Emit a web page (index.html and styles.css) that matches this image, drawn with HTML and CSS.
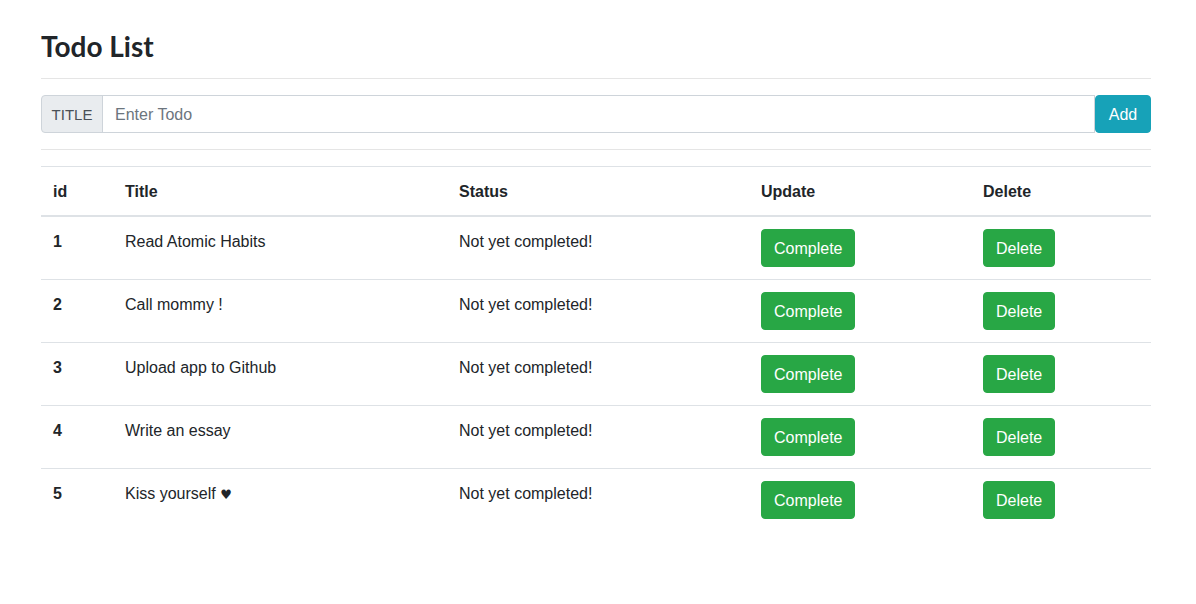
FILE: index.html
```html
<!DOCTYPE html>
<html lang="en">
<head>
<meta charset="utf-8">
<title>Todo List</title>
<link rel="stylesheet" href="styles.css">
</head>
<body>
<div class="container">
  <h2 class="title">Todo List</h2>
  <hr class="rule">
  <form class="input-group">
    <span class="prepend">TITLE</span>
    <input class="field" type="text" placeholder="Enter Todo">
    <button class="btn btn-info" type="button">Add</button>
  </form>
  <hr class="rule">
  <table class="table">
    <thead>
      <tr>
        <th class="c-id">id</th>
        <th class="c-title">Title</th>
        <th class="c-status">Status</th>
        <th class="c-update">Update</th>
        <th class="c-delete">Delete</th>
      </tr>
    </thead>
    <tbody>
      <tr>
        <th>1</th><td>Read Atomic Habits</td><td>Not yet completed!</td>
        <td class="act"><button class="btn btn-success">Complete</button></td>
        <td class="act"><button class="btn btn-success">Delete</button></td>
      </tr>
      <tr>
        <th>2</th><td>Call mommy !</td><td>Not yet completed!</td>
        <td class="act"><button class="btn btn-success">Complete</button></td>
        <td class="act"><button class="btn btn-success">Delete</button></td>
      </tr>
      <tr>
        <th>3</th><td>Upload app to Github</td><td>Not yet completed!</td>
        <td class="act"><button class="btn btn-success">Complete</button></td>
        <td class="act"><button class="btn btn-success">Delete</button></td>
      </tr>
      <tr>
        <th>4</th><td>Write an essay</td><td>Not yet completed!</td>
        <td class="act"><button class="btn btn-success">Complete</button></td>
        <td class="act"><button class="btn btn-success">Delete</button></td>
      </tr>
      <tr>
        <th>5</th><td>Kiss yourself <span class="heart">♥</span></td><td>Not yet completed!</td>
        <td class="act"><button class="btn btn-success">Complete</button></td>
        <td class="act"><button class="btn btn-success">Delete</button></td>
      </tr>
    </tbody>
  </table>
</div>
</body>
</html>
```

FILE: styles.css
```css
* { box-sizing: border-box; }

html, body {
  margin: 0;
  padding: 0;
  background: #fff;
}

body {
  font-family: "Liberation Sans", Arial, sans-serif;
  font-size: 16px;
  line-height: 24px;
  color: #212529;
}

.container {
  width: 1110px;
  margin-left: 41px;
  padding-top: 24px;
}

.title {
  margin: 0;
  font-family: Lato, "Liberation Sans", sans-serif;
  font-size: 28px;
  font-weight: 700;
  line-height: 38px;
  height: 38px;
  padding-top: 3px;
  color: #212529;
}

.rule {
  margin: 16px 0;
  border: 0;
  border-top: 1px solid rgba(0, 0, 0, 0.1);
  height: 0;
}

.input-group {
  display: flex;
  height: 38px;
  margin: 0;
}

.prepend {
  display: flex;
  align-items: center;
  justify-content: center;
  width: 62px;
  padding: 1px 0 0;
  background: #e9ecef;
  border: 1px solid #ced4da;
  border-radius: 4px 0 0 4px;
  color: #495057;
  font-size: 15px;
}

.field {
  flex: 1;
  height: 38px;
  margin: 0 0 0 -1px;
  padding: 2px 12px 0;
  border: 1px solid #ced4da;
  border-radius: 0;
  font-family: inherit;
  font-size: 16px;
  color: #495057;
  outline: none;
}

.field::placeholder {
  color: #6c757d;
  opacity: 1;
}

.btn {
  display: inline-block;
  font-family: inherit;
  font-size: 16px;
  line-height: 24px;
  padding: 7px 12px 5px;
  border: 1px solid transparent;
  border-radius: 4px;
  color: #fff;
  cursor: pointer;
}

.btn-info {
  background: #17a2b8;
  border-color: #17a2b8;
  width: 56px;
  padding: 7px 0 5px;
  text-align: center;
}

.btn-success {
  background: #28a745;
  border-color: #28a745;
}

.table {
  width: 1110px;
  border-collapse: collapse;
  table-layout: fixed;
}

.table th,
.table td {
  padding: 13px 12px 11px;
  vertical-align: top;
  border-top: 1px solid #dee2e6;
  text-align: left;
}

.table td.act {
  padding: 12px;
}

.table th {
  font-weight: 700;
}

.table thead th {
  border-bottom: 2px solid #dee2e6;
}

.c-id { width: 72px; }
.c-title { width: 334px; }
.c-status { width: 302px; }
.c-update { width: 222px; }
.c-delete { width: 180px; }

.heart {
  font-family: "DejaVu Sans", sans-serif;
  font-size: 13px;
}
```
